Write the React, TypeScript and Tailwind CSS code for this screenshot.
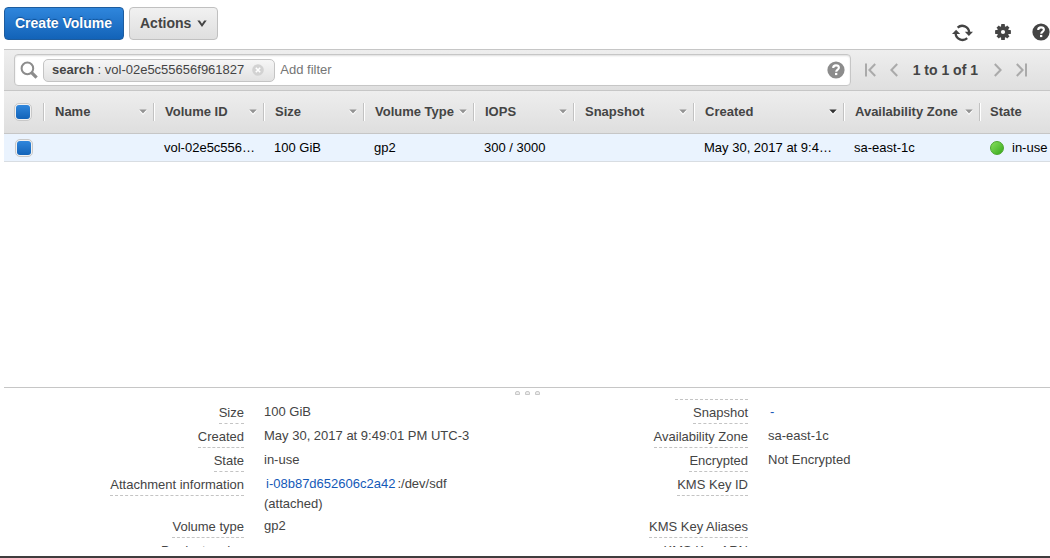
import React, { useState } from "react";

const columns = [
  { key: "name", label: "Name", width: "w-[110px]" },
  { key: "volumeId", label: "Volume ID", width: "w-[110px]" },
  { key: "size", label: "Size", width: "w-[100px]" },
  { key: "type", label: "Volume Type", width: "w-[110px]" },
  { key: "iops", label: "IOPS", width: "w-[100px]" },
  { key: "snapshot", label: "Snapshot", width: "w-[120px]" },
  { key: "created", label: "Created", width: "w-[150px]", sorted: true },
  { key: "zone", label: "Availability Zone", width: "w-[136px]" },
];

const volume: Record<string, string> = {
  name: "",
  volumeId: "vol-02e5c55656f961827",
  size: "100 GiB",
  type: "gp2",
  iops: "300 / 3000",
  snapshot: "",
  created: "May 30, 2017 at 9:49:01 PM UTC-3",
  zone: "sa-east-1c",
};

function SelectBox({ label }: { label: string }) {
  const [checked, setChecked] = useState(true);
  return (
    <input
      type="checkbox"
      aria-label={label}
      checked={checked}
      onChange={() => setChecked(!checked)}
      className="grid size-[18px] appearance-none place-items-center rounded-[5px] border border-[#c8c8c8] bg-[#f1f1f1] before:hidden before:size-[14px] before:rounded-[3px] before:bg-linear-to-b before:from-[#2f86dc] before:to-[#1263b8] before:content-[''] checked:before:block"
    />
  );
}

function SortArrow({ active }: { active?: boolean }) {
  return (
    <svg width="8" height="6" viewBox="0 0 8 6" className="shrink-0" aria-hidden="true">
      <path d="M0 1.5h8L4 6z" fill="#fff" />
      <path d="M0.3 0.5h7.4L4 4.6z" fill={active ? "#333" : "#939393"} />
    </svg>
  );
}

function RefreshIcon() {
  return (
    <svg width="22" height="18" viewBox="0 0 22 18" aria-hidden="true">
      <g fill="none" stroke="#444" strokeWidth="2.3">
        <path d="M5.6 3.6A7 7 0 0 1 17.2 8.4" />
        <path d="M15.2 14.2A7 7 0 0 1 3.6 9.4" />
      </g>
      <path d="M12.8 7.7h8.2l-4.1 4.4z" fill="#444" />
      <path d="M0 10.1h8.2L4.1 5.7z" fill="#444" />
    </svg>
  );
}

function GearIcon() {
  return (
    <svg width="16" height="16" viewBox="0 0 16 16" aria-hidden="true">
      <g fill="#444">
        <rect x="6.1" y="0.1" width="3.8" height="15.8" rx="0.4" />
        <rect x="6.3" y="0.4" width="3.4" height="15.2" rx="0.4" transform="rotate(45 8 8)" />
        <rect x="6.1" y="0.1" width="3.8" height="15.8" rx="0.4" transform="rotate(90 8 8)" />
        <rect x="6.3" y="0.4" width="3.4" height="15.2" rx="0.4" transform="rotate(135 8 8)" />
        <circle cx="8" cy="8" r="6" />
      </g>
      <circle cx="8" cy="8" r="2.1" fill="#fff" />
    </svg>
  );
}

function HelpIcon({ color }: { color: string }) {
  return (
    <svg width="18" height="18" viewBox="0 0 18 18" aria-hidden="true">
      <circle cx="9" cy="9" r="8.6" fill={color} />
      <path
        d="M6.2 7.1C6.2 5.3 7.4 4.4 9 4.4s2.9.9 2.9 2.4c0 1.7-2.7 1.9-2.7 4"
        fill="none"
        stroke="#fff"
        strokeWidth="2.1"
      />
      <rect x="8" y="11.9" width="2.3" height="2.2" fill="#fff" />
    </svg>
  );
}

function PagerIcon({ kind }: { kind: "first" | "prev" | "next" | "last" }) {
  const flip = kind === "next" || kind === "last";
  const bar = kind === "first" || kind === "last";
  return (
    <svg
      width={bar ? 11 : 8}
      height="14"
      viewBox={bar ? "0 0 11 14" : "3 0 8 14"}
      className={flip ? "-scale-x-100" : ""}
      aria-hidden="true"
    >
      <path d="M10.2 1L4.4 7l5.8 6" fill="none" stroke="#aaa" strokeWidth="2" />
      {bar && <path d="M1 0.5v13" stroke="#aaa" strokeWidth="2" />}
    </svg>
  );
}

const details: {
  left: string;
  leftValue: React.ReactNode;
  right: string;
  rightValue: React.ReactNode;
}[] = [
  {
    left: "Size",
    leftValue: "100 GiB",
    right: "Snapshot",
    rightValue: (
      <a href="#snapshot" className="px-[2px] text-[#1459b8]">
        -
      </a>
    ),
  },
  {
    left: "Created",
    leftValue: "May 30, 2017 at 9:49:01 PM UTC-3",
    right: "Availability Zone",
    rightValue: "sa-east-1c",
  },
  { left: "State", leftValue: "in-use", right: "Encrypted", rightValue: "Not Encrypted" },
  {
    left: "Attachment information",
    leftValue: (
      <>
        <a href="#instance" className="px-[2px] text-[#1459b8]">
          i-08b87d652606c2a42
        </a>
        :/dev/sdf (attached)
      </>
    ),
    right: "KMS Key ID",
    rightValue: "",
  },
  { left: "Volume type", leftValue: "gp2", right: "KMS Key Aliases", rightValue: "" },
  { left: "Product codes", leftValue: "", right: "KMS Key ARN", rightValue: "" },
];

function DetailLabel({ children }: { children: string }) {
  return (
    <dt className="flex items-start justify-end">
      <span className="border-b border-dashed border-[#c4c4c4] leading-[21px]">{children}</span>
    </dt>
  );
}

export default function App() {
  const [filter, setFilter] = useState("");
  return (
    <div className="flex h-screen flex-col overflow-hidden bg-white font-['Liberation_Sans',Arial,sans-serif] text-[13px] text-[#444]">
      <header className="flex shrink-0 items-start justify-between pt-[7px] pb-[7px] pl-1">
        <div className="flex gap-[5px]">
          <button className="h-[33px] rounded-[4px] border border-[#1d5c9e] bg-linear-to-b from-[#2f86dc] to-[#1263b8] pr-[11px] pl-[10px] text-[14px] font-bold text-white [text-shadow:0_-1px_1px_#0f4f93]">
            Create Volume
          </button>
          <button className="flex h-[33px] items-center gap-[6px] rounded-[4px] border border-[#c0c0c0] bg-linear-to-b from-[#f1f1f1] to-[#dfdfdf] px-[10px] text-[14px] font-bold">
            Actions
            <svg width="10" height="8" viewBox="0 0 10 8" aria-hidden="true">
              <path d="M0.3 0.6h2.5L5 3.8l2.2-3.2h2.5L5 7z" fill="#444" />
            </svg>
          </button>
        </div>
        <div className="flex items-center gap-[21px] pt-[15px]">
          <button aria-label="Refresh" className="pt-[2px]">
            <RefreshIcon />
          </button>
          <button aria-label="Settings">
            <GearIcon />
          </button>
          <button aria-label="Help">
            <HelpIcon color="#444" />
          </button>
        </div>
      </header>

      <div className="ml-1 flex shrink-0 items-center border-t border-[#c6c6c6] bg-linear-to-b from-[#eee] to-[#dfdfdf] py-1 pl-[10px]">
        <div className="flex h-[32px] flex-1 items-center rounded-[4px] border border-[#c6c6c6] bg-white px-[5px] shadow-[inset_0_1px_2px_#ddd]">
          <svg width="18" height="18" viewBox="0 0 18 18" className="shrink-0" aria-hidden="true">
            <circle cx="7.4" cy="7.4" r="5.8" fill="none" stroke="#8c8c8c" strokeWidth="2" />
            <path d="M11.6 11.6l5 5" stroke="#8c8c8c" strokeWidth="3.2" />
          </svg>
          <div className="ml-[5px] flex h-[23px] items-center whitespace-nowrap rounded-[5px] border border-[#c4c4c4] bg-linear-to-b from-[#f6f6f6] to-[#e2e2e2] px-2">
            <b>search</b>
            <span className="whitespace-pre"> : vol-02e5c55656f961827</span>
            <button aria-label="Remove filter" className="ml-2 mr-[2px]">
              <svg width="12" height="12" viewBox="0 0 12 12" aria-hidden="true">
                <circle cx="6" cy="6" r="5.8" fill="#d2d2d2" />
                <path d="M3.8 3.8l4.4 4.4M8.2 3.8L3.8 8.2" stroke="#fff" strokeWidth="1.6" />
              </svg>
            </button>
          </div>
          <input
            type="text"
            aria-label="Add filter"
            placeholder="Add filter"
            value={filter}
            onChange={(e) => setFilter(e.target.value)}
            className="ml-[5px] min-w-0 flex-1 bg-transparent outline-none placeholder:text-[#757575]"
          />
          <button aria-label="Filter help">
            <HelpIcon color="#8c8c8c" />
          </button>
        </div>
        <nav className="flex items-center pr-[23px] pl-[14px]" aria-label="Pages">
          <button aria-label="First page">
            <PagerIcon kind="first" />
          </button>
          <button aria-label="Previous page" className="ml-[14px]">
            <PagerIcon kind="prev" />
          </button>
          <span className="mr-4 ml-[15px] text-[14px] font-bold whitespace-nowrap">1 to 1 of 1</span>
          <button aria-label="Next page">
            <PagerIcon kind="next" />
          </button>
          <button aria-label="Last page" className="ml-[14px]">
            <PagerIcon kind="last" />
          </button>
        </nav>
      </div>

      <main className="ml-1 min-h-0 flex-1 overflow-hidden">
        <table className="w-full min-w-[1046px] table-fixed border-separate border-spacing-0">
          <thead>
            <tr className="h-[44px] bg-linear-to-b from-[#eee] to-[#dedede]">
              <th className="w-[39px] border-y border-[#c6c6c6] pl-[10px]">
                <SelectBox label="Select all volumes" />
              </th>
              {columns.map((c) => (
                <th key={c.key} className={`${c.width} border-y border-[#c6c6c6] p-0`}>
                  <button className="flex h-[18px] w-full items-center justify-between border-l border-[#c2c2c2] pr-[6px] pl-[11px] font-bold whitespace-nowrap shadow-[inset_1px_0_0_#fff]">
                    {c.label}
                    <SortArrow active={c.sorted} />
                  </button>
                </th>
              ))}
              <th className="border-y border-[#c6c6c6] p-0">
                <button className="flex h-[18px] w-full items-center border-l border-[#c2c2c2] pl-[10px] font-bold shadow-[inset_1px_0_0_#fff]">
                  State
                </button>
              </th>
            </tr>
          </thead>
          <tbody className="text-black">
            <tr className="h-[28px] bg-[#eaf3fe]">
              <td className="border-b border-[#d8dde2] pl-[11px]">
                <SelectBox label="Select volume" />
              </td>
              {columns.map((c) => (
                <td key={c.key} className="truncate border-b border-[#d8dde2] pr-[6px] pl-[11px]">
                  {volume[c.key]}
                </td>
              ))}
              <td className="border-b border-[#d8dde2] pl-[11px]">
                <div className="flex items-center gap-2 whitespace-nowrap">
                  <span className="size-[14px] shrink-0 rounded-full border border-[#4aa52b] bg-linear-to-br from-[#85e05c] to-[#35a916]" />
                  in-use
                </div>
              </td>
            </tr>
          </tbody>
        </table>
      </main>

      <section className="ml-1 h-[160px] shrink-0 overflow-hidden border-t border-[#c6c6c6]">
        <div className="flex h-[11px] justify-center gap-[5px] pt-[3px]">
          {[0, 1, 2].map((i) => (
            <span
              key={i}
              className="h-[4px] w-[5px] rounded-t-[2px] border border-[#c8c8c8] bg-[#eee]"
            />
          ))}
        </div>
        <dl className="-ml-1 grid grid-cols-[244fr_260fr_244fr_302fr]">
          <div className="col-span-3 flex h-[3px] justify-end">
            <span className="h-px w-[73px] border-b border-dashed border-[#c4c4c4]" />
          </div>
          <div />
          {details.map((d) => (
            <React.Fragment key={d.left}>
              <DetailLabel>{d.left}</DetailLabel>
              <dd className="min-h-[24px] pr-[32px] pb-[2px] pl-5 leading-[20px]">{d.leftValue}</dd>
              <DetailLabel>{d.right}</DetailLabel>
              <dd className="pb-[2px] pl-5 leading-[20px]">{d.rightValue}</dd>
            </React.Fragment>
          ))}
        </dl>
      </section>
      <footer className="mt-[9px] h-[2px] shrink-0 bg-[#403d3e]" />
    </div>
  );
}
